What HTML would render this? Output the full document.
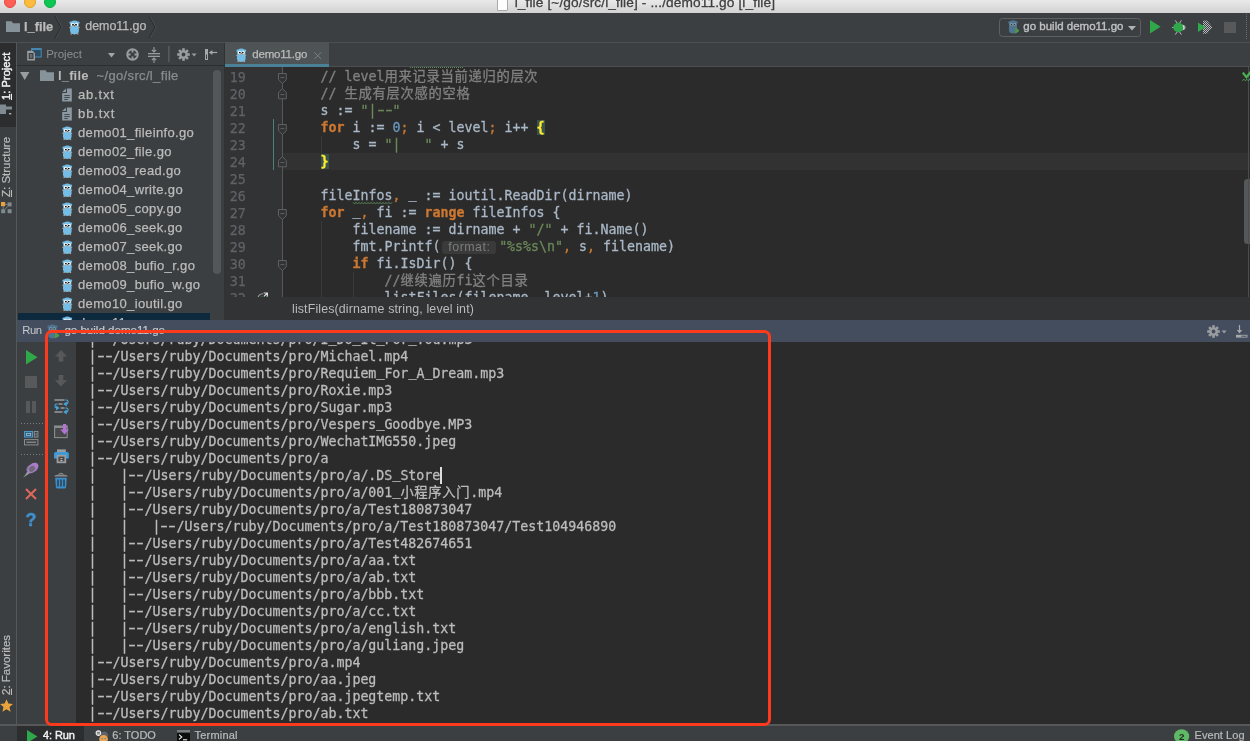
<!DOCTYPE html>
<html lang="en">
<head>
<meta charset="utf-8">
<title>l_file</title>
<style>
*{box-sizing:border-box;margin:0;padding:0}
html,body{width:1250px;height:741px;overflow:hidden;background:#3c3f41}
body{position:relative;-webkit-font-smoothing:antialiased;font-family:"Liberation Sans","Noto Sans CJK SC",sans-serif;font-size:12px;color:#bbbbbb}
.abs{position:absolute}
.mono{font-family:"DejaVu Sans Mono","Liberation Mono","Noto Sans CJK SC",monospace}
svg{display:block;overflow:visible}

/* ---------- mac title bar ---------- */
#title{left:0;top:0;width:1250px;height:12.6px;background:linear-gradient(#e9e9e9,#d2d2d2);overflow:hidden}
#titleline{left:0;top:12.5px;width:1250px;height:1px;background:#2a2c2d}
#title .tl{position:absolute;top:-4.1px;width:12px;height:12px;border-radius:50%}
#title .txt{-webkit-text-stroke:0.3px;position:absolute;left:514.7px;top:-4.6px;font-size:13.7px;letter-spacing:0.11px;color:#3f3f3f;white-space:nowrap}
#title .doc{position:absolute;left:497px;top:-2.5px;width:11px;height:13px;background:#fdfdfd;border:1px solid #a9a9a9;border-radius:1px}

/* ---------- nav bar ---------- */
#nav{left:0;top:13px;width:1250px;height:29px;background:#3c3f41}
#navline{left:0;top:42px;width:1250px;height:1px;background:#4d5052}
.navtxt{-webkit-text-stroke:0.25px;position:absolute;top:6px;font-size:13px;color:#bbbbbb;white-space:nowrap}

/* ---------- left strip ---------- */
#lstrip{left:0;top:43px;width:17px;height:682px;background:#3c3f41}
#lstripline{left:16px;top:43px;width:1px;height:682px;background:#555759}
.vtxt{-webkit-text-stroke:0.2px;position:absolute;white-space:nowrap;font-size:11.5px;color:#bbbbbb;transform-origin:0 0;transform:rotate(-90deg)}

/* ---------- project panel ---------- */
#projhead{left:18px;top:43px;width:206px;height:22px;background:#3c3f41}
#projheadline{left:17px;top:65px;width:207px;height:1px;background:#2b2d2e}
#proj{left:18px;top:66px;width:206px;height:254px;background:#3c3f41;overflow:hidden}
.trow{-webkit-text-stroke:0.25px;position:absolute;left:0;width:206px;height:19px;font-size:13px;letter-spacing:0.35px;color:#bbbbbb;white-space:nowrap}
.trow span.t{position:absolute;top:2px}
#projsplit{left:222px;top:42px;width:3px;height:278px;background:#3c3f41}
#projsplitline{left:224px;top:43px;width:1px;height:277px;background:#323232}

/* ---------- editor ---------- */
#tabs{left:225px;top:43px;width:1025px;height:23px;background:#3c3f41}
#tabsline{left:329px;top:66px;width:921px;height:1px;background:#4d5052}
#tab{left:225px;top:42.2px;width:104px;height:24.8px;background:#4e5456}
#tabul{left:225px;top:64px;width:104px;height:3px;background:#4b8196}
#gutter{left:225px;top:67px;width:57px;height:230px;background:#313335}
#editor{left:282px;top:67px;width:968px;height:230px;background:#2b2b2b;overflow:hidden}
#caretrow{left:282px;top:153px;width:968px;height:17px;background:#323232}
#code{left:225px;top:67px;width:1025px;height:230px;overflow:hidden}
.ln{-webkit-text-stroke:0.25px;position:absolute;margin-top:0.6px;left:0;width:20.8px;text-align:right;font-size:13.29px;color:#606366;height:17px;line-height:17px}
.cl{position:absolute;left:63.6px;font-size:13.29px;-webkit-text-stroke:0.3px;color:#a9b7c6;white-space:pre;height:17px;line-height:17px}
.k{color:#cc7832;font-weight:bold}.s{color:#6a8759}.n{color:#6897bb}.c{color:#808080}.p{color:#cc7832}
#crumb{left:225px;top:297px;width:1025px;height:23px;background:#313335}
#crumb span{position:absolute;left:67px;top:4.5px;font-size:12.4px;letter-spacing:0.14px;color:#bbbbbb;white-space:nowrap}

/* ---------- run panel ---------- */
#runhead{left:17px;top:319.5px;width:1233px;height:22.5px;background:#434d5e}
#runtb{left:17px;top:342px;width:59px;height:383px;background:#3c3f41}
#console{left:76px;top:342px;width:1174px;height:383px;background:#2b2b2b;overflow:hidden}
.ol{position:absolute;left:12.5px;font-size:13.29px;-webkit-text-stroke:0.3px;color:#bbbbbb;white-space:pre;height:17px;line-height:17px}

/* ---------- bottom bar ---------- */
#botline{left:0;top:724px;width:1250px;height:2px;background:#555759}
#bot{left:0;top:725px;width:1250px;height:16px;background:#3c3f41}
.bt{-webkit-text-stroke:0.2px;position:absolute;top:4.3px;font-size:11px;color:#bbbbbb;white-space:nowrap}

#redbox{left:45px;top:330px;width:726px;height:396px;border:3px solid #fd3a1c;border-radius:6.5px}

.br{color:#ffef28;font-weight:bold;background:#3b514d}
.typo{position:relative}
.typo svg{position:absolute;left:0;top:14px}
.hint{display:inline-block;width:58.6px;height:17px;vertical-align:top;position:relative}
.hint span{position:absolute;left:1.8px;top:2.5px;width:54px;height:13px;border-radius:3px;background:#3a3a3a;color:#7a7c7e;font-family:"Liberation Sans",sans-serif;font-size:12.4px;line-height:13px;text-align:center;letter-spacing:0.5px;-webkit-text-stroke:0}
.caret{display:inline-block;width:1.7px;height:16.4px;background:#dddddd;vertical-align:top;margin-top:0.3px;margin-left:-0.4px;margin-right:-1.3px}
.cj{letter-spacing:0.7px}
.u{position:relative;top:-1.6px}
.h{display:inline-block;transform:scaleX(1.62)}
.ic{position:absolute}
</style>
</head>
<body>
<div id="root" style="position:absolute;left:0;top:0;width:1250px;height:741px;will-change:transform">
<svg width="0" height="0" style="position:absolute">
<defs>
  <symbol id="gopher" viewBox="0 0 11 15">
    <circle cx="1.7" cy="2.7" r="1.3" fill="#74bde6"/><circle cx="9.3" cy="2.7" r="1.3" fill="#74bde6"/>
    <path d="M1.3 4.6 Q1.3 0.4 5.5 0.4 Q9.7 0.4 9.7 4.6 L9.8 7.2 Q10.3 10.2 9.6 12.6 Q8.9 14.4 5.5 14.4 Q2.1 14.4 1.4 12.6 Q0.7 10.2 1.2 7.2 Z" fill="#74bde6"/>
    <circle cx="0.9" cy="7.6" r="0.7" fill="#d9a37c"/><circle cx="10.1" cy="7.6" r="0.7" fill="#d9a37c"/>
    <circle cx="2.2" cy="14" r="0.75" fill="#d9a37c"/><circle cx="8.8" cy="14" r="0.75" fill="#d9a37c"/>
    <circle cx="3.7" cy="4.6" r="1.75" fill="#ffffff"/><circle cx="7.3" cy="4.6" r="1.75" fill="#ffffff"/>
    <circle cx="4" cy="4.7" r="0.95" fill="#0c0c0c"/><circle cx="7" cy="4.7" r="0.95" fill="#0c0c0c"/>
    <ellipse cx="5.5" cy="6.3" rx="1" ry="0.7" fill="#c9a184"/>
    <ellipse cx="5.5" cy="5.8" rx="0.7" ry="0.45" fill="#3a2d25"/>
  </symbol>
  <symbol id="gopherdim" viewBox="0 0 11 15">
    <circle cx="1.7" cy="2.7" r="1.3" fill="#4e7490"/><circle cx="9.3" cy="2.7" r="1.3" fill="#4e7490"/>
    <path d="M1.3 4.6 Q1.3 0.4 5.5 0.4 Q9.7 0.4 9.7 4.6 L9.8 7.2 Q10.3 10.2 9.6 12.6 Q8.9 14.4 5.5 14.4 Q2.1 14.4 1.4 12.6 Q0.7 10.2 1.2 7.2 Z" fill="#4e7490"/>
    <circle cx="3.7" cy="4.6" r="1.6" fill="#8299a9"/><circle cx="7.3" cy="4.6" r="1.6" fill="#8299a9"/>
    <circle cx="3.9" cy="4.7" r="0.7" fill="#26323c"/><circle cx="7.1" cy="4.7" r="0.7" fill="#26323c"/>
    <ellipse cx="5.5" cy="6.3" rx="1" ry="0.7" fill="#7d7468"/>
    <path d="M8 8.3 L13.2 11.4 L8 14.6 Z" fill="#4f9a48"/>
  </symbol>
  <symbol id="folder" viewBox="0 0 14 11">
    <path d="M0 0.3 H5.6 L7 2.2 H14 V11 H0 Z" fill="#87939a"/>
  </symbol>
  <symbol id="txt" viewBox="0 0 11 14">
    <path d="M5.2 0 H10.4 V14 H0.2 V5 H5.2 Z" fill="#8a99a3"/>
    <path d="M0.2 3.9 L4.1 0 V3.9 Z" fill="#8a99a3"/>
    <path d="M2.4 7.6 H8.2 M2.4 9.7 H8.2 M2.4 11.8 H6.2" stroke="#3c3f41" stroke-width="0.95" fill="none"/>
  </symbol>
</defs>
</svg>
<!-- TITLE -->
<div id="title" class="abs">
  <div class="tl" style="left:4.1px;background:#fd5f57;border:0.6px solid #e2463f"></div>
  <div class="tl" style="left:23.7px;background:#fdbc3f;border:0.6px solid #dfa023"></div>
  <div class="tl" style="left:44.1px;background:#0dc752;border:0.6px solid #0aab40"></div>
  <div class="doc"></div>
  <div class="txt">l_file [~/go/src/l_file] - .../demo11.go [l_file]</div>
</div>
<div id="titleline" class="abs"></div>

<!-- NAV -->
<div id="nav" class="abs">
  <svg class="ic" style="left:6px;top:8px" width="14" height="11"><use href="#folder"/></svg>
  <div class="navtxt" style="left:24px;font-weight:bold;font-size:12.8px">l_file</div>
  <svg class="ic" style="left:54px;top:0" width="9" height="28"><path d="M1 3.3 L7 14.3 L1 25.3" fill="none" stroke="#2b2d2e" stroke-width="1.1"/><path d="M2.1 3.3 L8.1 14.3 L2.1 25.3" fill="none" stroke="#4a4d4f" stroke-width="1"/></svg>
  <svg class="ic" style="left:68.5px;top:7px" width="11" height="15"><use href="#gopher"/></svg>
  <div class="navtxt" style="left:85.3px;font-size:12.4px">demo11.go</div>
  <svg class="ic" style="left:148px;top:0" width="9" height="28"><path d="M1 3.3 L7 14.3 L1 25.3" fill="none" stroke="#2b2d2e" stroke-width="1.1"/><path d="M2.1 3.3 L8.1 14.3 L2.1 25.3" fill="none" stroke="#4a4d4f" stroke-width="1"/></svg>
  <div class="abs" style="left:999px;top:5px;width:141.5px;height:18.5px;border:1px solid #5e6163;border-radius:3.5px;background:#3c3f41"></div>
  <svg class="ic" style="left:1007px;top:7.2px" width="12" height="14"><use href="#gopherdim"/></svg>
  <div class="abs" style="left:1023.3px;top:7.2px;font-size:11.5px;-webkit-text-stroke:0.35px;color:#c0c2c4;white-space:nowrap">go build demo11.go</div>
  <svg class="ic" style="left:1127.6px;top:12.6px" width="8" height="4.6"><path d="M0 0 H8 L4 4.6 Z" fill="#b0b2b4"/></svg>
  <svg class="ic" style="left:1150px;top:7.3px" width="10.6" height="13.6"><path d="M0 0 L10.6 6.8 L0 13.6 Z" fill="#2fa84a"/></svg>
  <svg class="ic" style="left:1172px;top:6.5px" width="15" height="15">
    <path d="M3.2 0.4 L5.2 3 M9.4 0.4 L7.6 3 M3.2 14.6 L5.2 12 M9.4 14.6 L7.6 12 M0.2 7.5 H2" stroke="#c8cacc" stroke-width="0.9"/>
    <ellipse cx="6.4" cy="7.5" rx="5.2" ry="4.7" fill="#2fa84a"/>
    <path d="M10.4 4.2 Q14.6 7.5 10.4 10.8 Q12.2 7.5 10.4 4.2 Z" fill="#e4e4e4"/>
    <path d="M11.4 5 Q14.6 7.5 11.4 10" stroke="#d8d8d8" stroke-width="1" fill="none"/>
  </svg>
  <svg class="ic" style="left:1198px;top:6.8px" width="15" height="14.4">
    <defs><pattern id="chk" width="2" height="2" patternUnits="userSpaceOnUse"><rect width="1" height="1" fill="#b9bbbd"/><rect x="1" y="1" width="1" height="1" fill="#b9bbbd"/></pattern></defs>
    <path d="M5 0.6 H9 L14.4 7.2 L9 13.8 H5 Z" fill="url(#chk)"/>
    <path d="M0 2.4 L7.4 7.2 L0 12 Z" fill="#2fa84a"/>
  </svg>
  <div class="abs" style="left:1224px;top:8.6px;width:12px;height:11.6px;background:#58595b"></div>
  <div class="abs" style="left:1246px;top:1px;width:1px;height:26px;background:repeating-linear-gradient(180deg,#6c6f71 0 1px,transparent 1px 2px)"></div>
</div>
<div id="navline" class="abs"></div>

<!-- LEFT STRIP -->
<div id="lstrip" class="abs">
  <div class="abs" style="left:0;top:0px;width:16px;height:84px;background:#2b2d2e"></div>
  <div class="vtxt" style="left:0.3px;top:56.6px;font-size:11.2px;color:#f0f0f0;-webkit-text-stroke:0.45px"><u>1</u>: Project</div>
  <svg class="ic" style="left:0;top:61px" width="13" height="12"><path d="M0 0.5 H6 V2.5 H12 V5.4 H6 V10 H0 Z" fill="#7f8b91"/><rect x="7.5" y="6" width="5.5" height="5.5" fill="#2b2d2e"/><rect x="9" y="9.3" width="2.3" height="1" fill="#e8e8e8"/></svg>
  <div class="vtxt" style="left:0.3px;top:154px"><u>Z</u>: Structure</div>
  <svg class="ic" style="left:1px;top:159px" width="11" height="12"><rect x="0" y="0" width="4.2" height="4.2" fill="#e8a33d"/><rect x="6.6" y="0.4" width="4" height="4" fill="#7f8b91"/><rect x="0.2" y="7.2" width="4" height="4" fill="#7f8b91"/><rect x="6.6" y="7.2" width="4" height="4" fill="#7f8b91"/><path d="M4.2 2.4 H6.6 M2.2 4.2 V7.2 M4.2 7 L6.8 4.4" stroke="#7f8b91" stroke-width="0.9" fill="none"/></svg>
  <div class="vtxt" style="left:0.3px;top:652px"><u>2</u>: Favorites</div>
  <svg class="ic" style="left:0;top:656px" width="13" height="13"><path d="M6.5 0.3 L8.4 4.6 L13 5 L9.5 8.1 L10.6 12.7 L6.5 10.3 L2.4 12.7 L3.5 8.1 L0 5 L4.6 4.6 Z" fill="#e8a33d"/></svg>
</div>
<div id="lstripline" class="abs"></div>

<!-- PROJECT -->
<div id="projhead" class="abs">
  <svg class="ic" style="left:8.5px;top:4.5px" width="15" height="13">
    <rect x="4.6" y="0.6" width="9.6" height="8.4" fill="#2c4c63" stroke="#478ab6" stroke-width="1"/>
    <rect x="4.6" y="0.6" width="9.6" height="1.4" fill="#478ab6"/>
    <path d="M0.2 2.8 H5.6 L8 5.2 V12.4 H0.2 Z" fill="#9b9ea0"/>
    <path d="M2 6.4 H6.2 M2 8.4 H6.2 M2 10.4 H5" stroke="#3c3f41" stroke-width="0.9"/>
    <rect x="1.7" y="5" width="4.8" height="6" fill="#3c3f41"/><path d="M2.8 7 H5.4 M2.8 9 H5.4" stroke="#9b9ea0" stroke-width="0.9"/>
  </svg>
  <div class="abs" style="left:28.2px;top:5px;font-size:11.5px;color:#8c8f91">Project</div>
  <svg class="ic" style="left:90px;top:9.8px" width="7" height="4.4"><path d="M0 0 H7 L3.5 4.4 Z" fill="#a4a7a9"/></svg>
  <svg class="ic" style="left:107.6px;top:4.8px" width="13" height="13"><circle cx="6.5" cy="6.5" r="5.3" fill="none" stroke="#9a9da0" stroke-width="1.9"/><path d="M6.5 1 V4.6 M6.5 8.4 V12 M1 6.5 H4.6 M8.4 6.5 H12" stroke="#9a9da0" stroke-width="1.9"/></svg>
  <svg class="ic" style="left:130px;top:3.5px" width="12" height="16"><path d="M0 6.6 H12 M0 9.4 H12" stroke="#9a9da0" stroke-width="1.1"/><path d="M6 0 V4.6 M3.8 2.8 L6 5 L8.2 2.8 M6 16 V11.4 M3.8 13.2 L6 11 L8.2 13.2" stroke="#9a9da0" stroke-width="1.1" fill="none"/></svg>
  <div class="abs" style="left:150px;top:3px;width:2px;height:16px;background:linear-gradient(90deg,#5c5f61,#47494b)"></div>
  <svg class="ic" style="left:158.5px;top:4.8px" width="20" height="13">
    <g transform="translate(6.5 6.5)" fill="#9a9da0">
      <circle r="4.3"/>
      <rect x="-1.3" y="-6.3" width="2.6" height="12.6"/>
      <rect x="-1.3" y="-6.3" width="2.6" height="12.6" transform="rotate(45)"/>
      <rect x="-1.3" y="-6.3" width="2.6" height="12.6" transform="rotate(90)"/>
      <rect x="-1.3" y="-6.3" width="2.6" height="12.6" transform="rotate(135)"/>
      <circle r="1.9" fill="#3c3f41"/>
    </g>
    <path d="M14.6 5.4 H19.6 L17.1 8.4 Z" fill="#9a9da0"/>
  </svg>
  <svg class="ic" style="left:187px;top:6px" width="13" height="11"><rect x="0" y="0" width="3" height="11" fill="#a6a8aa"/><rect x="1" y="5.6" width="1" height="4.4" fill="#3c3f41"/><path d="M4.3 3.5 H12.2" stroke="#a6a8aa" stroke-width="1.2"/><path d="M4 3.5 L7.4 1 V6 Z" fill="#a6a8aa"/></svg>
</div>
<div id="projheadline" class="abs"></div>
<div id="proj" class="abs">
<div class="trow" style="top:0"><svg class="ic" style="left:2.2px;top:6px" width="9.2" height="7.8"><path d="M0 0 H9.4 L4.7 8 Z" fill="#9a9da0"/></svg><svg class="ic" style="left:22px;top:4px" width="14" height="11"><use href="#folder"/></svg><span class="t" style="left:40px;font-weight:bold;letter-spacing:0.15px;-webkit-text-stroke:0">l_file</span><span class="t" style="left:78.5px;color:#8a8d8f">~/go/src/l_file</span></div>
<div class="trow" style="top:19px"><svg class="ic" style="left:43.8px;top:2.8px" width="10.4" height="14"><use href="#txt"/></svg><span class="t" style="left:60px;letter-spacing:0.8px">ab.txt</span></div>
<div class="trow" style="top:38px"><svg class="ic" style="left:43.8px;top:2.8px" width="10.4" height="14"><use href="#txt"/></svg><span class="t" style="left:60px;letter-spacing:0.92px">bb.txt</span></div>
<div class="trow" style="top:57px"><svg class="ic" style="left:43.6px;top:2.8px" width="10.6" height="14.5"><use href="#gopher"/></svg><span class="t" style="left:60px">demo01_fileinfo.go</span></div>
<div class="trow" style="top:76px"><svg class="ic" style="left:43.6px;top:2.8px" width="10.6" height="14.5"><use href="#gopher"/></svg><span class="t" style="left:60px">demo02_file.go</span></div>
<div class="trow" style="top:95px"><svg class="ic" style="left:43.6px;top:2.8px" width="10.6" height="14.5"><use href="#gopher"/></svg><span class="t" style="left:60px">demo03_read.go</span></div>
<div class="trow" style="top:114px"><svg class="ic" style="left:43.6px;top:2.8px" width="10.6" height="14.5"><use href="#gopher"/></svg><span class="t" style="left:60px">demo04_write.go</span></div>
<div class="trow" style="top:133px"><svg class="ic" style="left:43.6px;top:2.8px" width="10.6" height="14.5"><use href="#gopher"/></svg><span class="t" style="left:60px">demo05_copy.go</span></div>
<div class="trow" style="top:152px"><svg class="ic" style="left:43.6px;top:2.8px" width="10.6" height="14.5"><use href="#gopher"/></svg><span class="t" style="left:60px">demo06_seek.go</span></div>
<div class="trow" style="top:171px"><svg class="ic" style="left:43.6px;top:2.8px" width="10.6" height="14.5"><use href="#gopher"/></svg><span class="t" style="left:60px">demo07_seek.go</span></div>
<div class="trow" style="top:190px"><svg class="ic" style="left:43.6px;top:2.8px" width="10.6" height="14.5"><use href="#gopher"/></svg><span class="t" style="left:60px">demo08_bufio_r.go</span></div>
<div class="trow" style="top:209px"><svg class="ic" style="left:43.6px;top:2.8px" width="10.6" height="14.5"><use href="#gopher"/></svg><span class="t" style="left:60px">demo09_bufio_w.go</span></div>
<div class="trow" style="top:228px"><svg class="ic" style="left:43.6px;top:2.8px" width="10.6" height="14.5"><use href="#gopher"/></svg><span class="t" style="left:60px">demo10_ioutil.go</span></div>
<div class="trow" style="top:247px"><div class="abs" style="left:0;top:0;width:192px;height:19px;background:#0d293e"></div><svg class="ic" style="left:43.6px;top:2.8px" width="10.6" height="14.5"><use href="#gopher"/></svg><span class="t" style="left:60px">demo11.go</span></div>
<div class="abs" style="left:195px;top:4px;width:8px;height:204px;border-radius:4px;background:#545759"></div>
</div>
<div id="projsplitline" class="abs"></div>

<!-- EDITOR -->
<div id="tabs" class="abs"></div>
<div id="tabsline" class="abs"></div>
<div id="tab" class="abs">
  <svg class="ic" style="left:10.8px;top:5.6px" width="10.6" height="14.5"><use href="#gopher"/></svg>
  <div class="abs" style="left:27.3px;top:6.3px;font-size:11.5px;letter-spacing:-0.2px;color:#bbbbbb;white-space:nowrap;-webkit-text-stroke:0.25px">demo11.go</div>
  <svg class="ic" style="left:89px;top:9.4px" width="7.4" height="7.4"><path d="M0.3 0.3 L7.1 7.1 M7.1 0.3 L0.3 7.1" stroke="#7d8082" stroke-width="1"/></svg>
</div>
<div id="tabul" class="abs"></div>
<div id="gutter" class="abs"></div>
<div id="editor" class="abs"></div>
<div id="caretrow" class="abs"></div>
<div id="code" class="abs mono">
<div class="abs" style="left:57px;top:0;width:1px;height:231px;background:#555759"></div>
<div class="abs" style="left:47.8px;top:52px;width:1.3px;height:51px;background:#4a817a"></div>
<svg class="ic" style="left:53.1px;top:5.7px" width="8.8" height="11.5"><path d="M0.5 0.5 H8.3 V6.8 L4.4 10.6 L0.5 6.8 Z" fill="#313335" stroke="#5e6164" stroke-width="1"/><path d="M2.4 4.6 H6.4" stroke="#5e6164" stroke-width="1"/></svg>
<svg class="ic" style="left:53.1px;top:20.9px" width="8.8" height="11.5"><path d="M0.5 10.8 H8.3 V4.6 L4.4 0.6 L0.5 4.6 Z" fill="#313335" stroke="#5e6164" stroke-width="1"/><path d="M2.4 6.6 H6.4" stroke="#5e6164" stroke-width="1"/></svg>
<svg class="ic" style="left:53.1px;top:56.7px" width="8.8" height="11.5"><path d="M0.5 0.5 H8.3 V6.8 L4.4 10.6 L0.5 6.8 Z" fill="#313335" stroke="#5e6164" stroke-width="1"/><path d="M2.4 4.6 H6.4" stroke="#5e6164" stroke-width="1"/></svg>
<svg class="ic" style="left:53.1px;top:88.9px" width="8.8" height="11.5"><path d="M0.5 10.8 H8.3 V4.6 L4.4 0.6 L0.5 4.6 Z" fill="#313335" stroke="#5e6164" stroke-width="1"/><path d="M2.4 6.6 H6.4" stroke="#5e6164" stroke-width="1"/></svg>
<svg class="ic" style="left:53.1px;top:141.7px" width="8.8" height="11.5"><path d="M0.5 0.5 H8.3 V6.8 L4.4 10.6 L0.5 6.8 Z" fill="#313335" stroke="#5e6164" stroke-width="1"/><path d="M2.4 4.6 H6.4" stroke="#5e6164" stroke-width="1"/></svg>
<svg class="ic" style="left:53.1px;top:192.7px" width="8.8" height="11.5"><path d="M0.5 0.5 H8.3 V6.8 L4.4 10.6 L0.5 6.8 Z" fill="#313335" stroke="#5e6164" stroke-width="1"/><path d="M2.4 4.6 H6.4" stroke="#5e6164" stroke-width="1"/></svg>
<div class="abs" style="left:96px;top:69px;width:1px;height:17px;background:#3a3a3a"></div>
<div class="abs" style="left:96px;top:154px;width:1px;height:80px;background:#3a3a3a"></div>
<div class="abs" style="left:128px;top:205px;width:1px;height:30px;background:#3a3a3a"></div>
<div class="abs" style="left:185px;top:0;width:54px;height:1px;background:repeating-linear-gradient(90deg,#5f8a5a 0 1px,transparent 1px 2px)"></div>
<svg class="ic" style="left:31.5px;top:224.5px" width="12" height="12"><circle cx="5.6" cy="6.4" r="4.6" fill="none" stroke="#9a9da0" stroke-width="1.1"/><rect x="6" y="0" width="6" height="4.4" fill="#313335"/><path d="M6.6 1 H10.4 V4.6 M10.4 1 L7 4.4" stroke="#dcdcdc" stroke-width="1.2" fill="none"/><circle cx="5.2" cy="6.4" r="1.9" fill="#22c02a"/></svg>
<div class="abs" style="left:1018.5px;top:112px;width:7px;height:65px;border-radius:3.5px 0 0 3.5px;background:#55585a"></div>
<div class="abs" style="left:1023px;top:0;width:1px;height:231px;background:#4a4c4e"></div>
<svg class="ic" style="left:1016.5px;top:2.5px" width="10" height="12"><path d="M0.8 2.6 L4.4 7.2 L10 0.4" stroke="#4caf50" stroke-width="2.3" fill="none"/><path d="M0.3 10.8 L1.8 9.2 L3.3 10.8 L4.8 9.2 L6.3 10.8 L7.8 9.2 L9.3 10.8" stroke="#4caf50" stroke-width="0.9" fill="none"/></svg>
<div class="ln" style="top:1px">19</div><div class="cl" style="top:1px">    <span class="c">// level<span class="cj">用来记录当前递归的层次</span></span></div>
<div class="ln" style="top:18px">20</div><div class="cl" style="top:18px">    <span class="c">// <span class="cj">生成有层次感的空格</span></span></div>
<div class="ln" style="top:35px">21</div><div class="cl" style="top:35px">    s := <span class="s">"|<span class="h">-</span><span class="h">-</span>"</span></div>
<div class="ln" style="top:52px">22</div><div class="cl" style="top:52px">    <span class="k">for</span> i := <span class="n">0</span><span class="p">;</span> i &lt; level<span class="p">;</span> i++ <span class="br">{</span></div>
<div class="ln" style="top:69px">23</div><div class="cl" style="top:69px">        s = <span class="s">"|   "</span> + s</div>
<div class="ln" style="top:86px">24</div><div class="cl" style="top:86px">    <span class="br">}</span></div>
<div class="ln" style="top:103px">25</div><div class="cl" style="top:103px"></div>
<div class="ln" style="top:120px">26</div><div class="cl" style="top:120px">    file<span class="typo">Infos<svg width="39" height="3"><polyline points="0,0.3 1.5,2.0 3,0.3 4.5,2.0 6,0.3 7.5,2.0 9,0.3 10.5,2.0 12,0.3 13.5,2.0 15,0.3 16.5,2.0 18,0.3 19.5,2.0 21,0.3 22.5,2.0 24,0.3 25.5,2.0 27,0.3 28.5,2.0 30,0.3 31.5,2.0 33,0.3 34.5,2.0 36,0.3 37.5,2.0 39,0.3" fill="none" stroke="#5a8a55" stroke-width="0.9"/></svg></span><span class="p">,</span> <span class="u">_</span> := ioutil.ReadDir(dirname)</div>
<div class="ln" style="top:137px">27</div><div class="cl" style="top:137px">    <span class="k">for</span> <span class="u">_</span><span class="p">,</span> fi := <span class="k">range</span> fileInfos {</div>
<div class="ln" style="top:154px">28</div><div class="cl" style="top:154px">        filename := dirname + <span class="s">"/"</span> + fi.Name()</div>
<div class="ln" style="top:171px">29</div><div class="cl" style="top:171px">        fmt.Printf(<span class="hint"><span>format:</span></span><span class="s">"%s%s\n"</span><span class="p">,</span> s<span class="p">,</span> filename)</div>
<div class="ln" style="top:188px">30</div><div class="cl" style="top:188px">        <span class="k">if</span> fi.IsDir() {</div>
<div class="ln" style="top:205px">31</div><div class="cl" style="top:205px">            <span class="c">//<span class="cj">继续遍历</span>fi<span class="cj">这个目录</span></span></div>
<div class="ln" style="top:222px">32</div><div class="cl" style="top:222px">            listFiles(filename<span class="p">,</span> level+<span class="n">1</span>)</div>
</div><!--/code-->
<div id="crumb" class="abs"><span>listFiles(dirname string, level int)</span></div>

<!-- RUN -->
<div id="runhead" class="abs">
  <div class="abs" style="left:5.3px;top:4.8px;font-size:11.3px;color:#c6c8ca;letter-spacing:-0.55px">Run</div>
  <svg class="ic" style="left:29px;top:4px" width="13" height="15"><use href="#gopherdim"/></svg>
  <div class="abs" style="left:47.4px;top:4.8px;font-size:11.55px;color:#c6c8ca;white-space:nowrap;-webkit-text-stroke:0.2px">go build demo11.go</div>
  <svg class="ic" style="left:1190px;top:5px" width="20" height="13">
    <g transform="translate(6.5 6.5)" fill="#9a9da0">
      <circle r="4.3"/>
      <rect x="-1.3" y="-6.3" width="2.6" height="12.6"/>
      <rect x="-1.3" y="-6.3" width="2.6" height="12.6" transform="rotate(45)"/>
      <rect x="-1.3" y="-6.3" width="2.6" height="12.6" transform="rotate(90)"/>
      <rect x="-1.3" y="-6.3" width="2.6" height="12.6" transform="rotate(135)"/>
      <circle r="1.9" fill="#434d5e"/>
    </g>
    <path d="M14.6 5.4 H19.6 L17.1 8.4 Z" fill="#9a9da0"/>
  </svg>
  <svg class="ic" style="left:1219px;top:5px" width="12" height="13"><path d="M3.5 0 V7.5" stroke="#a6a8aa" stroke-width="1.2"/><path d="M0.8 5 H6.2 L3.5 8.4 Z" fill="#a6a8aa"/><rect x="0" y="9.8" width="11.5" height="2.8" fill="#a6a8aa"/><rect x="5.2" y="10.7" width="5.4" height="1" fill="#434d5e"/></svg>
</div>
<div id="runtb" class="abs">
  <svg class="ic" style="left:8.8px;top:8px" width="11.5" height="14.4"><path d="M0 0 L11.5 7.2 L0 14.4 Z" fill="#2fa84a"/></svg>
  <div class="abs" style="left:7.8px;top:34px;width:12.2px;height:12px;background:#58595b"></div>
  <div class="abs" style="left:8.8px;top:59px;width:3.8px;height:11.8px;background:#58595b"></div>
  <div class="abs" style="left:15.4px;top:59px;width:3.8px;height:11.8px;background:#58595b"></div>
  <div class="abs" style="left:4px;top:81px;width:23px;height:1px;background:repeating-linear-gradient(90deg,#7d8082 0 1px,transparent 1px 3px)"></div>
  <svg class="ic" style="left:6.8px;top:88.5px" width="14.4" height="14.4"><rect x="0.5" y="0.5" width="8" height="5.6" fill="#2d5a78" stroke="#4a9ac7"/><rect x="2.3" y="2.3" width="4.4" height="2" fill="none" stroke="#9fc9e4" stroke-width="0.8"/><rect x="10.3" y="0.5" width="3.6" height="5.6" fill="none" stroke="#8a8d8f"/><rect x="11.6" y="2" width="1" height="2.6" fill="#8a8d8f"/><rect x="0.5" y="8.6" width="13.4" height="5.3" fill="none" stroke="#8a8d8f"/><rect x="2.4" y="10.6" width="9.6" height="1.3" fill="#8a8d8f"/></svg>
  <div class="abs" style="left:4px;top:112px;width:23px;height:1px;background:repeating-linear-gradient(90deg,#7d8082 0 1px,transparent 1px 3px)"></div>
  <svg class="ic" style="left:6px;top:119.5px" width="16" height="16"><path d="M0.2 15.8 L5.2 8.6 L7.4 10.8 Z" fill="#9a9da0"/><ellipse cx="9.8" cy="6" rx="6.4" ry="4.2" transform="rotate(-38 9.8 6)" fill="#a87cc8"/><ellipse cx="9" cy="6.9" rx="3.3" ry="2.6" transform="rotate(-38 9 6.9)" fill="#6f6a75"/><path d="M3.8 9.2 Q3.2 5.4 6.4 3.2" stroke="#c9a7e0" stroke-width="0.8" fill="none" opacity="0.6"/></svg>
  <svg class="ic" style="left:8.2px;top:146.2px" width="12" height="12"><path d="M1 1 L11 11 M11 1 L1 11" stroke="#e0685a" stroke-width="2" fill="none"/></svg>
  <div class="abs" style="left:8.6px;top:167.5px;font-size:18px;font-weight:bold;color:#3f90cc;line-height:20px;-webkit-text-stroke:0.4px">?</div>

  <svg class="ic" style="left:38px;top:8.3px" width="12" height="11.6"><path d="M6 0 L12 6.4 H8.3 V11.6 H3.7 V6.4 H0 Z" fill="#58595b"/></svg>
  <svg class="ic" style="left:38px;top:32.8px" width="12" height="11.6"><path d="M6 11.6 L12 5.2 H8.3 V0 H3.7 V5.2 H0 Z" fill="#58595b"/></svg>
  <svg class="ic" style="left:36.5px;top:56.5px" width="15.4" height="16"><path d="M0.4 1 H10.6 M4.5 5 H8.5 M6.6 9 H10.6 M0.4 13 H8.5" stroke="#c4c6c8" stroke-width="1" fill="none"/><path d="M11.4 1 H12.4 Q14 1 14 2.7 V3.3 Q14 5 12.4 5 H12 M3.6 5 H2.6 Q1 5 1 6.7 V7.3 Q1 9 2.6 9 H3 M11.4 9 H12.4 Q14 9 14 10.7 V11.3 Q14 13 12.4 13 H12" stroke="#47a5de" stroke-width="1.1" fill="none"/><path d="M9.3 5 L12.7 2.5 V7.5 Z M5.5 9 L2.1 6.5 V11.5 Z M9.3 13 L12.7 10.5 V15.5 Z" fill="#47a5de"/></svg>
  <svg class="ic" style="left:36.7px;top:82px" width="15.5" height="14.5"><rect x="0.6" y="2" width="12.6" height="11.6" fill="#46484a" stroke="#8a8d8f" stroke-width="1.1"/><rect x="0.6" y="2" width="12.6" height="2" fill="#8a8d8f"/><path d="M9 0 H12.2 V5.6 H15 L10.6 10.4 L6.2 5.6 H9 Z" fill="#b473d1"/></svg>
  <svg class="ic" style="left:36.7px;top:107px" width="14.8" height="14.4"><rect x="3" y="0.4" width="8.8" height="3.4" fill="#9a9da0"/><path d="M0 4.6 Q0 3 1.8 3 H13 Q14.8 3 14.8 4.6 V9.4 H0 Z" fill="#3d9ad9"/><rect x="2.6" y="5.8" width="9.6" height="8.4" fill="#9a9da0"/><rect x="4.4" y="7.6" width="6" height="4.8" fill="#46484a"/><rect x="6.4" y="9.2" width="2" height="0.9" fill="#c8c8c8"/><rect x="6.4" y="11" width="2" height="0.9" fill="#c8c8c8"/></svg>
  <svg class="ic" style="left:37px;top:130.5px" width="14" height="16"><path d="M4.6 1.6 Q4.6 0.3 7 0.3 Q9.4 0.3 9.4 1.6" stroke="#8a8d8f" stroke-width="1" fill="none"/><path d="M0.2 3.6 Q0.2 1.6 7 1.6 Q13.8 1.6 13.8 3.6 Z" fill="#8a8d8f"/><path d="M1.2 4.8 H12.8 L12.1 14.2 Q12 15.6 10.4 15.6 H3.6 Q2 15.6 1.9 14.2 Z" fill="#3b8fcb"/><path d="M4 6.4 V13.4 M7 6.4 V13.4 M10 6.4 V13.4" stroke="#2b2b2b" stroke-width="1.2"/></svg>
</div>
<div id="console" class="abs mono">
<div class="ol" style="top:-11px">|<span class="h">-</span><span class="h">-</span>/Users/ruby/Documents/pro/I<span class="u">_</span>Do<span class="u">_</span>It<span class="u">_</span>For<span class="u">_</span>You.mp3</div>
<div class="ol" style="top:6px">|<span class="h">-</span><span class="h">-</span>/Users/ruby/Documents/pro/Michael.mp4</div>
<div class="ol" style="top:23px">|<span class="h">-</span><span class="h">-</span>/Users/ruby/Documents/pro/Requiem<span class="u">_</span>For<span class="u">_</span>A<span class="u">_</span>Dream.mp3</div>
<div class="ol" style="top:40px">|<span class="h">-</span><span class="h">-</span>/Users/ruby/Documents/pro/Roxie.mp3</div>
<div class="ol" style="top:57px">|<span class="h">-</span><span class="h">-</span>/Users/ruby/Documents/pro/Sugar.mp3</div>
<div class="ol" style="top:74px">|<span class="h">-</span><span class="h">-</span>/Users/ruby/Documents/pro/Vespers<span class="u">_</span>Goodbye.MP3</div>
<div class="ol" style="top:91px">|<span class="h">-</span><span class="h">-</span>/Users/ruby/Documents/pro/WechatIMG550.jpeg</div>
<div class="ol" style="top:108px">|<span class="h">-</span><span class="h">-</span>/Users/ruby/Documents/pro/a</div>
<div class="ol" style="top:125px">|   |<span class="h">-</span><span class="h">-</span>/Users/ruby/Documents/pro/a/.DS<span class="u">_</span>Store<span class="caret"></span></div>
<div class="ol" style="top:142px">|   |<span class="h">-</span><span class="h">-</span>/Users/ruby/Documents/pro/a/001<span class="u">_</span><span class="cj">小程序入门</span>.mp4</div>
<div class="ol" style="top:159px">|   |<span class="h">-</span><span class="h">-</span>/Users/ruby/Documents/pro/a/Test180873047</div>
<div class="ol" style="top:176px">|   |   |<span class="h">-</span><span class="h">-</span>/Users/ruby/Documents/pro/a/Test180873047/Test104946890</div>
<div class="ol" style="top:193px">|   |<span class="h">-</span><span class="h">-</span>/Users/ruby/Documents/pro/a/Test482674651</div>
<div class="ol" style="top:210px">|   |<span class="h">-</span><span class="h">-</span>/Users/ruby/Documents/pro/a/aa.txt</div>
<div class="ol" style="top:227px">|   |<span class="h">-</span><span class="h">-</span>/Users/ruby/Documents/pro/a/ab.txt</div>
<div class="ol" style="top:244px">|   |<span class="h">-</span><span class="h">-</span>/Users/ruby/Documents/pro/a/bbb.txt</div>
<div class="ol" style="top:261px">|   |<span class="h">-</span><span class="h">-</span>/Users/ruby/Documents/pro/a/cc.txt</div>
<div class="ol" style="top:278px">|   |<span class="h">-</span><span class="h">-</span>/Users/ruby/Documents/pro/a/english.txt</div>
<div class="ol" style="top:295px">|   |<span class="h">-</span><span class="h">-</span>/Users/ruby/Documents/pro/a/guliang.jpeg</div>
<div class="ol" style="top:312px">|<span class="h">-</span><span class="h">-</span>/Users/ruby/Documents/pro/a.mp4</div>
<div class="ol" style="top:329px">|<span class="h">-</span><span class="h">-</span>/Users/ruby/Documents/pro/aa.jpeg</div>
<div class="ol" style="top:346px">|<span class="h">-</span><span class="h">-</span>/Users/ruby/Documents/pro/aa.jpegtemp.txt</div>
<div class="ol" style="top:363px">|<span class="h">-</span><span class="h">-</span>/Users/ruby/Documents/pro/ab.txt</div>
</div><!--/console-->

<!-- BOTTOM -->
<div id="bot" class="abs">
  <div class="abs" style="left:17px;top:0;width:67px;height:16px;background:#2b2d2e"></div>
  <svg class="ic" style="left:27px;top:4.5px" width="10.5" height="13"><path d="M0 0 L10.5 6.5 L0 13 Z" fill="#2fa84a"/></svg>
  <div class="bt" style="left:43px;color:#f0f0f0;-webkit-text-stroke:0.45px;letter-spacing:-0.1px">4: Run</div>
  <svg class="ic" style="left:95px;top:5.4px" width="14" height="14"><path d="M5.4 6.6 Q5.6 1.6 9.4 1.6 Q13.2 1.8 13.2 6.6 Z" fill="#5d6369"/><ellipse cx="8.6" cy="9.2" rx="4.3" ry="4.2" fill="#e9a550"/><circle cx="7.2" cy="8.6" r="0.7" fill="#3b6ea5"/><circle cx="10.2" cy="8.6" r="0.7" fill="#3b6ea5"/><circle cx="3.4" cy="3.1" r="2.8" fill="#f2f2f2"/><path d="M1.8 2.3 H5 M1.8 3.9 H5" stroke="#3c3f41" stroke-width="0.8"/></svg>
  <div class="bt" style="left:112.3px">6: TODO</div>
  <svg class="ic" style="left:177px;top:5.2px" width="13" height="13"><rect x="0" y="0" width="13" height="13" fill="#0c0d0d"/><rect x="0" y="0" width="13" height="2.6" fill="#7a7d80"/><path d="M2 4.6 L4.8 7 L2 9.4" stroke="#f0f0f0" stroke-width="1.1" fill="none"/><path d="M6 9.8 H10.2" stroke="#f0f0f0" stroke-width="1.1"/></svg>
  <div class="bt" style="left:194.5px;letter-spacing:0.2px">Terminal</div>
  <svg class="ic" style="left:1173.8px;top:4px" width="16" height="15"><ellipse cx="7.6" cy="7.4" rx="7.6" ry="7.2" fill="#5fb865"/><path d="M10.5 12.5 L13.6 15 L13 11 Z" fill="#5fb865"/></svg>
  <div class="abs" style="left:1178.9px;top:5.6px;font-size:9.8px;font-weight:bold;color:#1e2a1f">2</div>
  <div class="bt" style="left:1194.6px;letter-spacing:0.05px">Event Log</div>
</div>

<div id="botline" class="abs"></div>
<div id="redbox" class="abs"></div>
</div>
</body>
</html>
